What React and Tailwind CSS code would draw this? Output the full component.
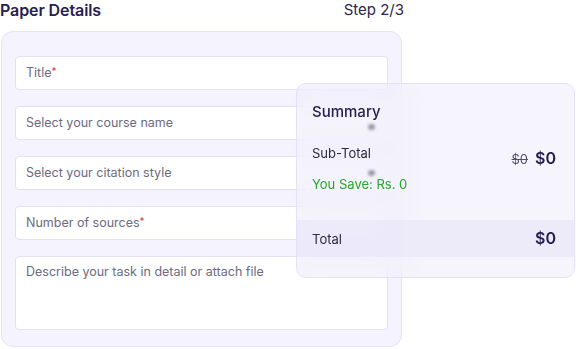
export default function App() {
  const font = { fontFamily: "Inter, 'Noto Sans', sans-serif" };
  const inputCls =
    "h-[34px] w-full rounded-[4px] border border-[#e3e0f6] bg-white px-[10px] flex items-center text-[12.5px] text-[#6c6b80]";
  return (
    <div className="relative w-[576px] h-[349px] bg-white overflow-hidden" style={font}>
      <div className="flex w-[404px] items-center justify-between h-[20px]">
        <div className="text-[16px] font-semibold text-[#27214f] tracking-[-0.1px]">Paper Details</div>
        <div className="text-[15px] text-[#2b2650]">Step 2/3</div>
      </div>
      <div className="ml-[1px] mt-[11px] w-[401px] h-[316px] rounded-[12px] border border-[#e6e2f9] bg-[#f5f3fd] px-[13px] pt-[24px] flex flex-col gap-[16px]">
        <div className={inputCls}>
          Title<span className="text-[#e0394a] text-[10px] self-start mt-[7px]">*</span>
        </div>
        <div className={inputCls}>Select your course name</div>
        <div className={inputCls}>Select your citation style</div>
        <div className={inputCls}>
          Number of sources<span className="text-[#e0394a] text-[10px] self-start mt-[7px]">*</span>
        </div>
        <div className="h-[74px] w-full rounded-[4px] border border-[#e3e0f6] bg-white px-[10px] pt-[6px] text-[12.5px] text-[#6c6b80]">
          Describe your task in detail or attach file
        </div>
      </div>

      <div className="absolute left-[296px] top-[83px] w-[279px] h-[195px] rounded-[10px] border border-[#e4e0f6] bg-[#ebe9fa]/45 backdrop-blur-md flex flex-col overflow-hidden">
        <span className="absolute left-[71px] top-[40px] h-[6px] w-[7px] rounded-full bg-[#9a98a8] blur-[1.5px]" />
        <span className="absolute left-[71px] top-[86px] h-[6px] w-[7px] rounded-full bg-[#9a98a8] blur-[1.5px]" />
        <div className="px-[15px] pt-[17px] text-[15px] font-medium text-[#231d4f]">Summary</div>
        <div className="mt-[20px] px-[15px] flex justify-between items-start">
          <div className="flex flex-col">
            <div className="text-[13px] text-[#2d2a3d] leading-[18px]">Sub-Total</div>
            <div className="mt-[13px] text-[13px] text-[#2ba52b] leading-[18px]">You Save: Rs. 0</div>
          </div>
          <div className="flex items-baseline gap-[7px] mr-[3px] mt-[2px]">
            <span className="text-[13px] text-[#55536a] line-through">$0</span>
            <span className="text-[16px] font-semibold text-[#231d4f]">$0</span>
          </div>
        </div>
        <div className="mt-[27px] h-[37px] bg-[#e9e7f9]/70 px-[15px] flex items-center justify-between">
          <span className="text-[13px] text-[#2d2a3d] mt-[3px]">Total</span>
          <span className="text-[16px] font-semibold text-[#231d4f] mr-[3px]">$0</span>
        </div>
      </div>
    </div>
  );
}
